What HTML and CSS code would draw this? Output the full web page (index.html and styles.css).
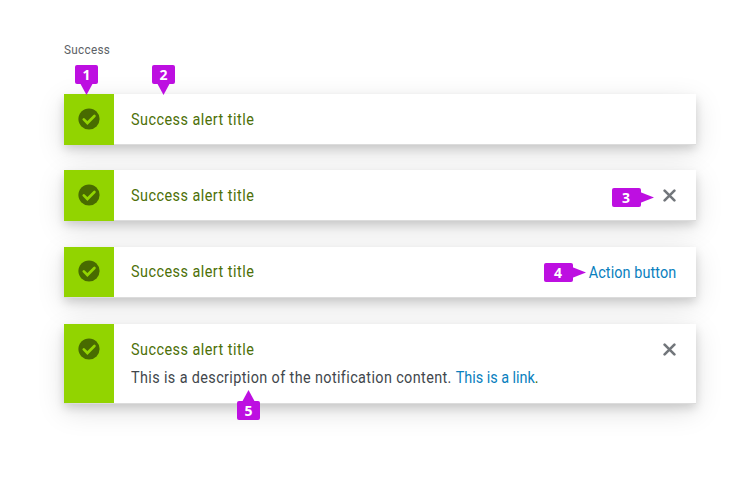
FILE: index.html
```html
<!DOCTYPE html>
<html lang="en">
<head>
<meta charset="utf-8">
<title>Success alerts</title>
<link rel="stylesheet" href="styles.css">
</head>
<body>
<svg class="defs" aria-hidden="true">
  <symbol id="check" viewBox="0 0 22 22"><circle cx="11" cy="11" r="10.6" fill="#486b00"/><path d="M5.8 11.4l3.6 3.6 7-7" fill="none" stroke="#92d400" stroke-width="2.7" stroke-linecap="round" stroke-linejoin="miter"/></symbol>
  <symbol id="close" viewBox="0 0 12 12"><path d="M1.5 1.5l9 9M10.5 1.5l-9 9" fill="none" stroke="#72767b" stroke-width="2.4" stroke-linecap="round"/></symbol>
</svg>
<main class="page">
  <h1 class="heading"><span class="heading-text">Success</span></h1>
  <section class="alert">
    <div class="status"><svg class="check"><use href="#check"/></svg></div>
    <div class="content"><h2 class="title"><span class="title-text">Success alert title</span></h2></div>
    <span class="marker down one">1</span>
    <span class="marker down two">2</span>
  </section>
  <section class="alert second">
    <div class="status"><svg class="check"><use href="#check"/></svg></div>
    <div class="content"><h2 class="title"><span class="title-text">Success alert title</span></h2></div>
    <button class="close" aria-label="Close"><svg><use href="#close"/></svg></button>
    <span class="marker right three">3</span>
  </section>
  <section class="alert third">
    <div class="status"><svg class="check"><use href="#check"/></svg></div>
    <div class="content"><h2 class="title"><span class="title-text">Success alert title</span></h2></div>
    <a class="action">Action button</a>
    <span class="marker right four">4</span>
  </section>
  <section class="alert tall">
    <div class="status"><svg class="check"><use href="#check"/></svg></div>
    <div class="content">
      <h2 class="title"><span class="title-text">Success alert title</span></h2>
      <p class="description">This is a description of the notification content. <a class="link">This is a link</a><span class="stop">.</span></p>
    </div>
    <button class="close" aria-label="Close"><svg><use href="#close"/></svg></button>
    <span class="marker up five">5</span>
  </section>
</main>
</body>
</html>
```
FILE: styles.css
```css
* { box-sizing: border-box; }
body { margin: 0; min-height: 492px; background: #fff; font-family: Roboto, sans-serif; }
.defs { position: absolute; width: 0; height: 0; }
.page { width: 632px; height: 492px; margin: 0 0 0 64px; padding-top: 40px; }
h1, h2, p { margin: 0; font-weight: 400; white-space: nowrap; }
.heading { height: 54px; color: #5c6166; font-size: 13px; line-height: 19px; letter-spacing: .35px; }
.heading-text, .title-text, .description, .action { display: inline-block; transform: scaleX(.9); transform-origin: 0 50%; }
.alert {
  position: relative;
  display: flex;
  height: 50px;
  margin-bottom: 26px;
  background: #fff;
  box-shadow: 0 1px 0 #dcdcdc, 0 5px 9px rgba(3,3,3,.14), 0 8px 28px rgba(3,3,3,.13);
}
.second { margin-bottom: 27px; }
.third { margin-bottom: 27px; }
.tall { height: 79px; margin-bottom: 0; }
.status { flex: none; width: 50px; height: 51px; background: #92d400; padding: 14px 0 0 14px; }
.third .status { height: 50px; padding-top: 13px; }
.tall .status { height: 79px; }
.check { display: block; width: 22px; height: 22px; }
.content { flex: 1; min-width: 0; padding: 14px 0 0 17px; }
.third .content { padding-top: 13px; }
.title { height: 24px; color: #4d7008; font-size: 16px; line-height: 24px; letter-spacing: .53px; }
.description { margin-top: 4px; color: #42474c; font-size: 16px; line-height: 24px; letter-spacing: .43px; }
.link, .action { color: #0a80be; font-size: 16px; }
.link { letter-spacing: -.02px; }
.stop { color: #486b00; }
.action { margin-right: 20px; line-height: 24px; padding-top: 14px; white-space: nowrap; letter-spacing: .1px; transform-origin: 100% 50%; }
.close { width: 13px; height: 13px; margin: 19px 20px 0 0; padding: 0; border: 0; background: none; }
.close svg { display: block; width: 13px; height: 13px; }
.marker {
  position: absolute;
  width: 23px;
  height: 19px;
  border-radius: 2px;
  background: #bd0fe1;
  color: #fff;
  font: 700 14px/20px "Open Sans", sans-serif;
  text-align: center;
}
.marker::after { content: ""; position: absolute; background: #bd0fe1; }
.down::after { left: 5px; top: 18px; width: 13px; height: 12px; clip-path: polygon(0 0, 100% 0, 50% 100%); }
.up::after { left: 5px; bottom: 18px; width: 13px; height: 12px; clip-path: polygon(50% 0, 100% 100%, 0 100%); }
.right { width: 29px; padding-right: 1px; }
.right::after { left: 28px; top: 4px; width: 14px; height: 11px; clip-path: polygon(0 0, 100% 50%, 0 100%); }
.one { left: 11px; top: -29px; }
.two { left: 88px; top: -29px; }
.three { left: 548px; top: 18px; }
.four { left: 480px; top: 16px; }
.five { left: 173px; top: 77px; }
```
